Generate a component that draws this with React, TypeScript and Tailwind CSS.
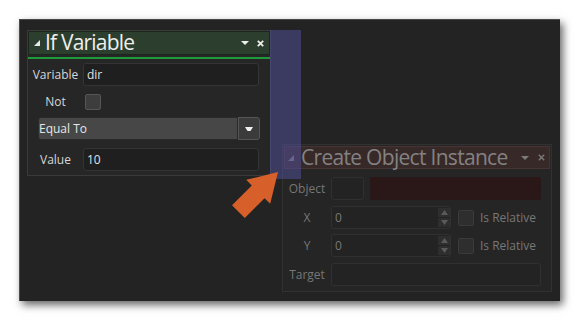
import React from "react";

function Tri({ color }: { color: string }) {
  return (
    <svg width="6" height="6" viewBox="0 0 6 6" className="shrink-0">
      <polygon points="6,0 6,6 0,6" fill={color} />
    </svg>
  );
}

function DownArrow({ color }: { color: string }) {
  return (
    <svg width="8" height="4" viewBox="0 0 8 4" className="shrink-0">
      <polygon points="0,0 8,0 4,4" fill={color} />
    </svg>
  );
}

function Cross({ color, w }: { color: string; w: number }) {
  return (
    <svg width="7" height="7" viewBox="0 0 7 7" className="shrink-0">
      <path d="M0.8 0.8 L6.2 6.2 M6.2 0.8 L0.8 6.2" stroke={color} strokeWidth={w} />
    </svg>
  );
}

function Spinner() {
  return (
    <div className="flex flex-col w-[12px] h-full py-[1px] gap-[1px]">
      <div className="flex-1 bg-[#2e2e2e] flex items-center justify-center">
        <svg width="7" height="5" viewBox="0 0 7 5">
          <polygon points="3.5,0 7,5 0,5" fill="#5a5a5a" />
        </svg>
      </div>
      <div className="flex-1 bg-[#2e2e2e] flex items-center justify-center">
        <svg width="7" height="5" viewBox="0 0 7 5">
          <polygon points="0,0 7,0 3.5,5" fill="#5a5a5a" />
        </svg>
      </div>
    </div>
  );
}

export default function App() {
  return (
    <div className="w-[580px] h-[321px] bg-white relative overflow-hidden pl-[19px] pt-[19px] font-['Open_Sans',sans-serif]">
      <div className="relative w-[541px] h-[282px] bg-[#232323] shadow-[inset_1px_1px_0_#4a4a4a,3px_4px_8px_rgba(0,0,0,0.6)]">
        {/* If Variable panel */}
        <div className="absolute left-[8px] top-[11px] w-[244px] h-[146px] bg-[#262626] border border-[#3a3a3a] flex flex-col">
          <div className="h-[24px] bg-[#2c3f2f] border border-[#1c261d] flex items-center pl-[5px] pr-[5px]">
            <Tri color="#e8e8e8" />
            <span className="ml-[5px] text-[21px] leading-[22px] tracking-[-0.8px] text-[#eeeeee] -mt-[2px]">If Variable</span>
            <div className="flex-1" />
            <DownArrow color="#eeeeee" />
            <div className="w-[8px]" />
            <Cross color="#eeeeee" w={1.8} />
          </div>
          <div className="mt-[2px] h-[2px] bg-[#1f9a3b]" />
          <div className="mt-[4px] flex items-center h-[23px]">
            <div className="w-[55px] text-center text-[12px] text-[#d6d6d6]">Variable</div>
            <div className="w-[176px] h-[23px] bg-[#1f1f1f] border border-[#343434] rounded-[3px] pl-[3px] flex items-center text-[12px] text-[#e2e2e2]">dir</div>
          </div>
          <div className="mt-[4px] flex items-center h-[23px]">
            <div className="w-[55px] text-center text-[12px] text-[#d6d6d6]">Not</div>
            <div className="ml-[2px] w-[16px] h-[16px] bg-[#3d3d3d] border border-[#555] rounded-[2px]" />
          </div>
          <div className="mt-[4px] ml-[10px] w-[222px] h-[23px] flex">
            <div className="flex-1 bg-[#474747] border border-[#2a2a2a] rounded-l-[3px] flex items-center text-[12px] text-[#e6e6e6]">Equal To</div>
            <div className="w-[22px] bg-[#3b3b3b] border border-[#555] rounded-r-[3px] flex items-center justify-center">
              <svg width="8" height="4" viewBox="0 0 8 4">
                <polygon points="0,0 8,0 5.5,4 2.5,4" fill="#f0f0f0" />
              </svg>
            </div>
          </div>
          <div className="mt-[8px] flex items-center h-[23px]">
            <div className="w-[55px] text-center text-[12px] text-[#d6d6d6]">Value</div>
            <div className="w-[176px] h-[23px] bg-[#1f1f1f] border border-[#343434] rounded-[3px] pl-[3px] flex items-center text-[12px] text-[#e2e2e2]">10</div>
          </div>
        </div>

        {/* Create Object Instance panel */}
        <div className="absolute left-[263px] top-[125px] w-[270px] h-[148px] bg-[#252525] border border-[#313131] flex flex-col">
          <div className="m-[1px] h-[23px] bg-[#382929] border border-[#453535] flex items-center pl-[3px] pr-[4px]">
            <Tri color="#777" />
            <span className="ml-[7px] text-[21px] leading-[22px] tracking-[-0.7px] text-[#828282] -mt-[2px]">Create Object Instance</span>
            <div className="flex-1" />
            <DownArrow color="#7a7a7a" />
            <div className="w-[9px]" />
            <Cross color="#7a7a7a" w={1.4} />
          </div>
          <div className="mt-[7px] flex items-center h-[23px]">
            <div className="w-[48px] text-center text-[12px] text-[#767676]">Object</div>
            <div className="w-[33px] h-[23px] bg-[#232323] border border-[#303030] rounded-[3px]" />
            <div className="ml-[6px] w-[171px] h-[23px] bg-[#2a1818] rounded-[2px]" />
          </div>
          <div className="mt-[6px] flex items-center h-[23px]">
            <div className="w-[48px] text-center text-[12px] text-[#767676]">X</div>
            <div className="w-[120px] h-[23px] bg-[#232323] border border-[#303030] rounded-[3px] pl-[3px] flex items-center text-[12px] text-[#777]">
              <span className="flex-1">0</span>
              <Spinner />
            </div>
            <div className="ml-[7px] w-[16px] h-[16px] bg-[#2e2e2e] border border-[#3a3a3a] rounded-[2px]" />
            <div className="ml-[6px] text-[12px] text-[#777]">Is Relative</div>
          </div>
          <div className="mt-[5px] flex items-center h-[23px]">
            <div className="w-[48px] text-center text-[12px] text-[#767676]">Y</div>
            <div className="w-[120px] h-[23px] bg-[#232323] border border-[#303030] rounded-[3px] pl-[3px] flex items-center text-[12px] text-[#777]">
              <span className="flex-1">0</span>
              <Spinner />
            </div>
            <div className="ml-[7px] w-[16px] h-[16px] bg-[#2e2e2e] border border-[#3a3a3a] rounded-[2px]" />
            <div className="ml-[6px] text-[12px] text-[#777]">Is Relative</div>
          </div>
          <div className="mt-[6px] flex items-center h-[23px]">
            <div className="w-[48px] text-center text-[12px] text-[#767676]">Target</div>
            <div className="w-[210px] h-[23px] bg-[#232323] border border-[#303030] rounded-[3px]" />
          </div>
        </div>

        {/* purple highlight */}
        <div className="absolute left-[251px] top-[11px] w-[31px] h-[149px] bg-[rgba(86,84,165,0.48)]" />
      </div>

      {/* arrow */}
      <svg className="absolute left-0 top-0 pointer-events-none" width="580" height="321" viewBox="0 0 580 321">
        <polygon
          points="278,172 270.2,203.8 264.6,198.2 244.8,218 232,205.2 251.8,185.4 246.2,179.8"
          fill="#d65f2a"
        />
      </svg>
    </div>
  );
}
